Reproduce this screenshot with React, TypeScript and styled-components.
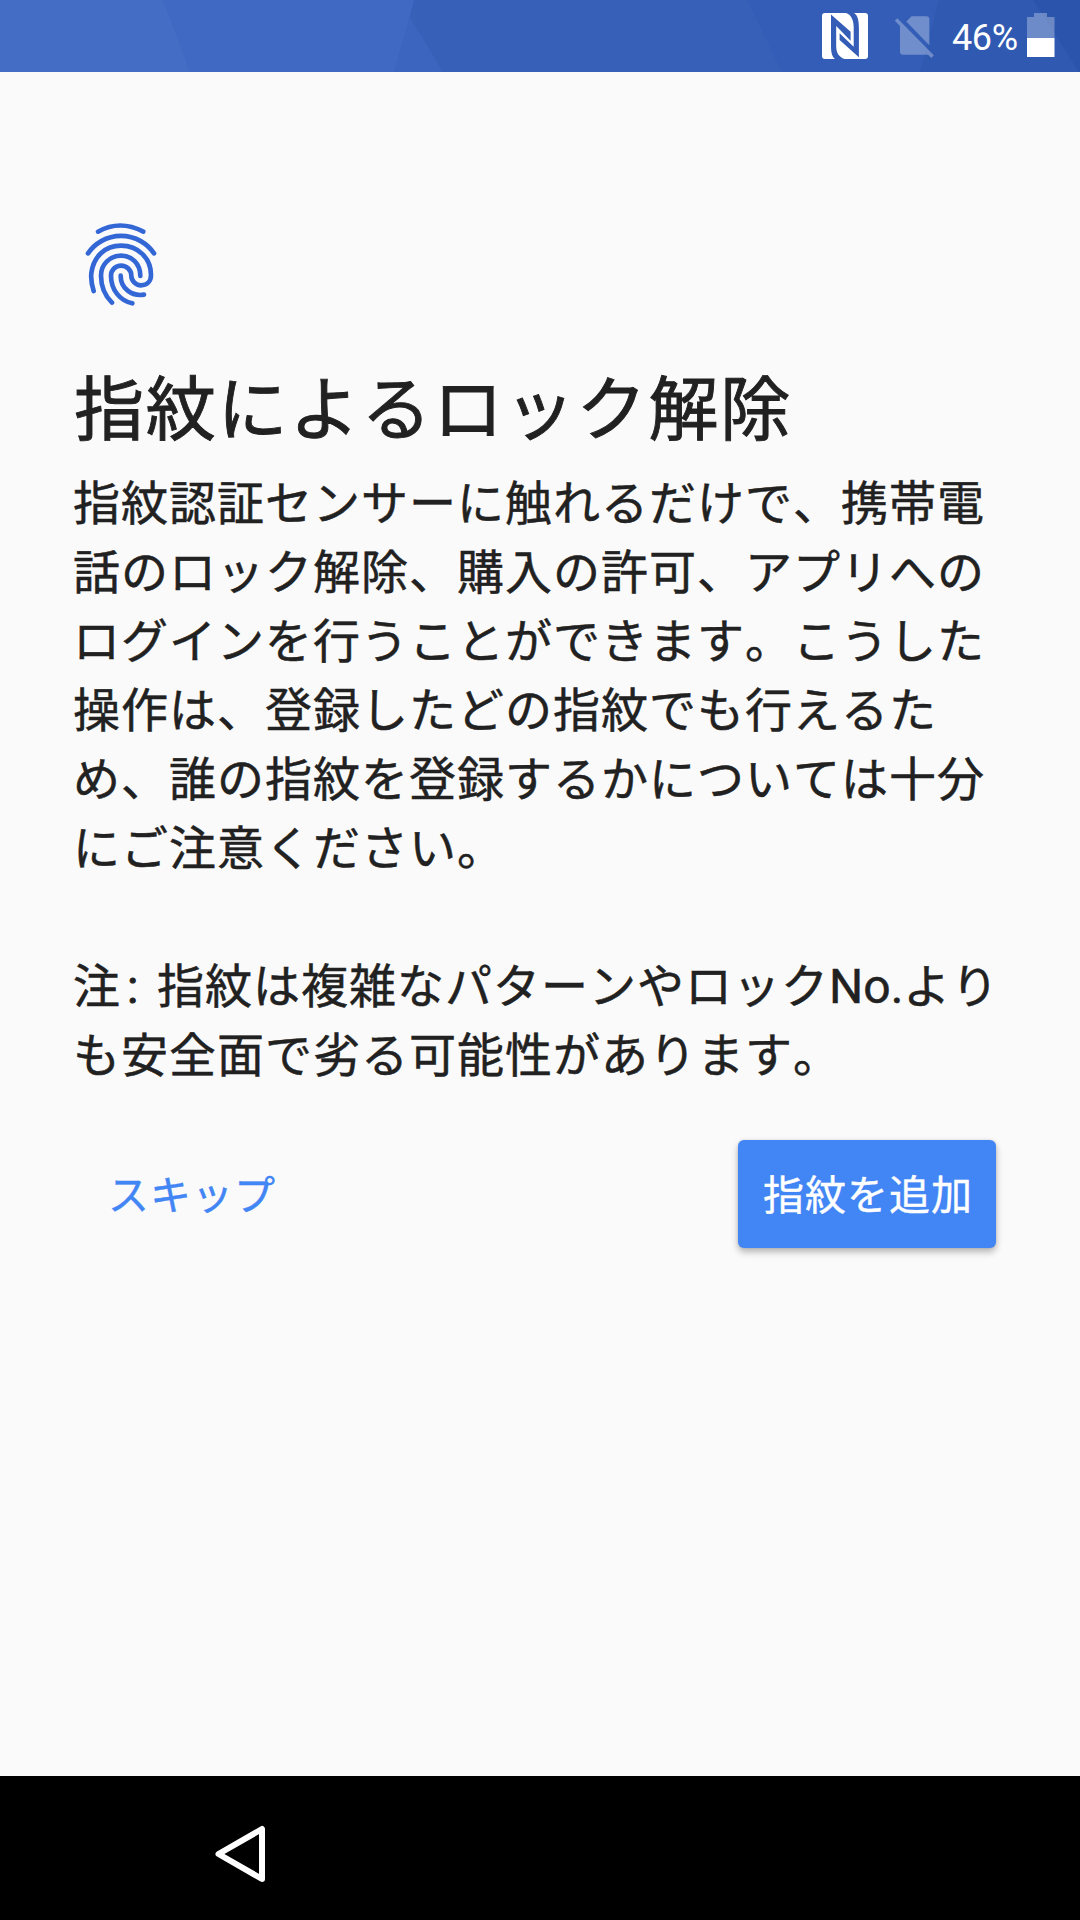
import React from "react";
import styled, { createGlobalStyle } from "styled-components";

const GlobalStyle = createGlobalStyle`
  * { box-sizing: border-box; }
  body { margin: 0; background: #fafafa; }
`;

const Screen = styled.div`
  display: flex;
  flex-direction: column;
  width: 1080px;
  height: 1920px;
  background: #fafafa;
  color: #212121;
  font-family: Roboto, "Noto Sans CJK JP", sans-serif;
  font-kerning: none;
  text-spacing-trim: space-all;
  overflow: hidden;
`;

const StatusBar = styled.header`
  position: relative;
  display: flex;
  justify-content: flex-end;
  flex: 0 0 72px;
  height: 72px;
  padding-right: 25px;
`;

const Backdrop = styled.svg`
  position: absolute;
  inset: 0;
`;

const StatusIcons = styled.div`
  position: relative;
  display: flex;
  align-items: flex-start;
`;

const StatusIcon = styled.svg<{ $gap: number }>`
  display: block;
  margin-right: ${(p) => p.$gap}px;
`;

const BatteryLevel = styled.span`
  width: 66px;
  margin-right: 9px;
  color: #fff;
  font-size: 36px;
  line-height: 42px;
  padding-top: 17px;
  letter-spacing: -0.4px;
  white-space: nowrap;
`;

const Content = styled.main`
  display: flex;
  flex-direction: column;
  flex: 1;
  padding: 138px 72px 0;
`;

const Fingerprint = styled.svg`
  display: block;
  margin-left: -2px;
`;

const Title = styled.h1`
  margin: 38px 0 0;
  padding-left: 2px;
  font-size: 70px;
  font-weight: 400;
  letter-spacing: 1.8px;
  line-height: 106px;
  white-space: nowrap;
  -webkit-text-stroke: 0.9px currentColor;
`;

const Body = styled.div`
  display: flex;
  flex-direction: column;
  gap: 69px;
  margin-top: 5px;
  padding-left: 1px;
  font-size: 47px;
  letter-spacing: 1px;
  line-height: 69px;
  -webkit-text-stroke: 0.5px currentColor;
`;

const Paragraph = styled.p`
  margin: 0;
  white-space: pre;
`;

const Colon = styled.span`
  padding: 0 5px 0 6px;
  -webkit-text-stroke: 1px currentColor;
`;

const Latin = styled.span`
  letter-spacing: 0;
  font-size: 48px;
  line-height: 1;
`;

const Actions = styled.div`
  display: flex;
  justify-content: space-between;
  margin: 50px 12px 0 0;
`;

const Button = styled.button<{ $raised?: boolean }>`
  height: 108px;
  padding: ${(p) => (p.$raised ? "4px 23px 0 25px" : "4px 36px 0")};
  border: 0;
  border-radius: 6px;
  background: ${(p) => (p.$raised ? "#4285f4" : "transparent")};
  box-shadow: ${(p) => (p.$raised ? "0 4px 7px rgba(0,0,0,.28), 0 0 3px rgba(0,0,0,.1)" : "none")};
  color: ${(p) => (p.$raised ? "#fff" : "#4285f4")};
  font-family: inherit;
  font-size: 41px;
  font-weight: 400;
  letter-spacing: 1px;
  line-height: 62px;
  white-space: nowrap;
  -webkit-text-stroke: 0.4px currentColor;
`;

const NavigationBar = styled.nav`
  display: flex;
  flex: 0 0 144px;
  background: #000;
  padding: 45px 0 0 212px;
`;

export default function App() {
  return (
    <>
      <GlobalStyle />
      <Screen>
        <StatusBar>
          <Backdrop width="1080" height="72" viewBox="0 0 1080 72" aria-hidden="true">
            <path fill="#446dc5" d="M0 0H1080V72H0z" />
            <path fill="#4069c3" d="M163 0H1080V72H190z" />
            <path fill="#3c65bf" d="M414 0H1080V72H394z" />
            <path fill="#3760b9" d="M414 0H1080V72H443L410 17z" />
            <path fill="#345db7" d="M747 0H1080V72H782z" />
            <path fill="#305ab2" d="M939 0H1080V72H920z" />
            <path fill="#2b55ac" d="M1033 0H1080V72H1079z" />
          </Backdrop>
          <StatusIcons>
            <StatusIcon $gap={26} width="46" height="72" viewBox="0 0 46 72" fill="#fff">
              <path d="M9 13H3Q0 13 0 16V56Q0 59 3 59H13C10 57 9 52 9 46z" />
              <path d="M9 13H24C29 14.500 31.700 20 31.700 27V46.700L17.600 33.300V40L36.900 57.300L39 59H22.500C17 57 14.200 53 14.200 46V26L28.600 40.700V31.700L9 14.500z" />
              <path d="M32 13H43Q46 13 46 16V56Q46 59 43 59H38L36.900 57.300V28C36.900 20 35.500 15 32 13z" />
            </StatusIcon>
            <StatusIcon $gap={17} width="41" height="72" viewBox="0 0 41 72" fill="#fff" opacity=".3">
              <path d="M12.300 21.500L17.500 16.300H32.300Q35.300 16.300 35.300 19.300V45.300z" />
              <path d="M0.800 20.800L3.300 18.300L39.800 55.300L37.300 58L34 54.700H9Q6 54.700 6 51.700V26z" />
            </StatusIcon>
            <BatteryLevel>46%</BatteryLevel>
            <StatusIcon $gap={0} width="28" height="72" viewBox="0 0 28 72" fill="#fff">
              <path opacity=".3" d="M7 13H20V17H27.500V38H0V17H7z" />
              <path d="M0 38H27.500V57H0z" />
            </StatusIcon>
          </StatusIcons>
        </StatusBar>
        <Content>
          <Fingerprint width="100" height="110" viewBox="0 0 300 330" fill="none" stroke="#3367d6" strokeWidth="14" strokeLinecap="round">
            <path d="M84 65Q150 28 220 65" />
            <path d="M54 130A120 120 0 0 1 252 130" />
            <path d="M71 243C62 215 63 200 64 190C70 140 105 107 153 107C205 107 243 145 243 195C243 215 230 226 213 226C197 226 184 212 184 197C184 180 170 167 153 167C137 167 123 180 123 197C123 240 150 272 187 280" />
            <path d="M211 198C211 160 185 137 153 137C120 137 93 163 93 197C93 230 105 257 126 278" />
            <path d="M152 197C152 235 185 260 222 254" />
          </Fingerprint>
          <Title>指紋によるロック解除</Title>
          <Body>
            <Paragraph>{`指紋認証センサーに触れるだけで、携帯電
話のロック解除、購入の許可、アプリへの
ログインを行うことができます。こうした
操作は、登録したどの指紋でも行えるた
め、誰の指紋を登録するかについては十分
にご注意ください。`}</Paragraph>
            <Paragraph>注<Colon>:</Colon> 指紋は複雑なパターンやロック<Latin>No.</Latin>より{"\n"}も安全面で劣る可能性があります。</Paragraph>
          </Body>
          <Actions>
            <Button>スキップ</Button>
            <Button $raised>指紋を追加</Button>
          </Actions>
        </Content>
        <NavigationBar>
          <svg width="56" height="64" viewBox="0 0 56 64" fill="none" stroke="#fff" strokeWidth="6" strokeLinejoin="round" aria-label="戻る">
            <path d="M50 8V58L6.500 33z" />
          </svg>
        </NavigationBar>
      </Screen>
    </>
  );
}
